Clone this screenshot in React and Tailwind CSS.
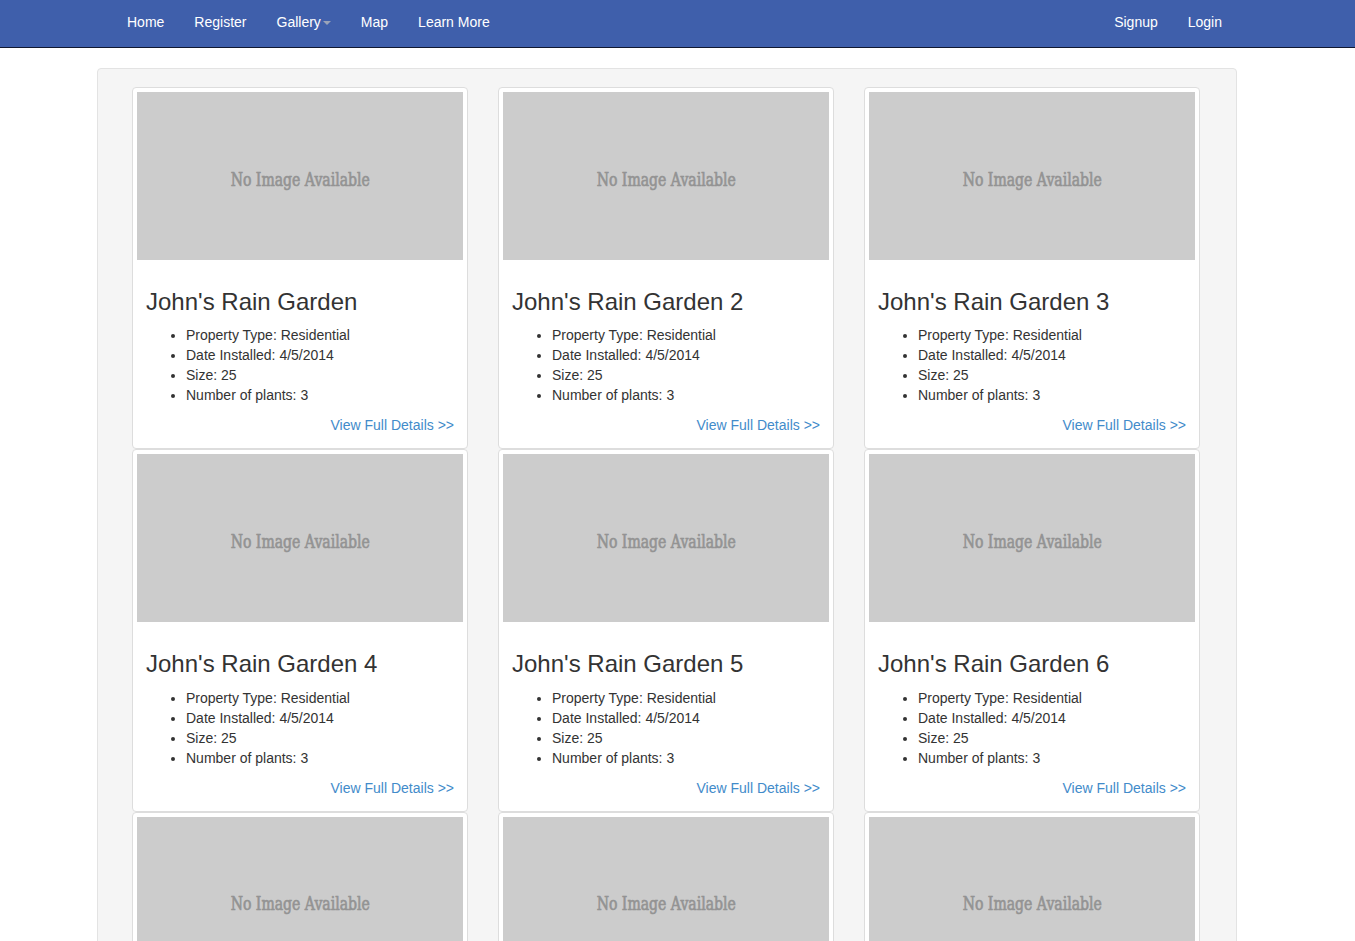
import React from 'react';

const gardens = [
    "John's Rain Garden",
    "John's Rain Garden 2",
    "John's Rain Garden 3",
    "John's Rain Garden 4",
    "John's Rain Garden 5",
    "John's Rain Garden 6",
    "John's Rain Garden 7",
    "John's Rain Garden 8",
    "John's Rain Garden 9",
];

const GardenCard = ({ name }) => (
    <div className="border border-[#ddd] rounded bg-white p-1">
        <div className="h-[168px] bg-[#ccc] flex items-center justify-center pt-[6px]">
            <span className="inline-block scale-x-[0.78] whitespace-nowrap text-[#939393] text-[18px] [font-family:'DejaVu_Serif',serif] [-webkit-text-stroke:0.7px_#939393]">
                No Image Available
            </span>
        </div>
        <div className="px-[9px] pt-[9px] pb-[9px] text-[#333]">
            <h3 className="mt-5 mb-[10px] text-2xl leading-[1.1] font-normal">{name}</h3>
            <ul className="list-disc pl-10 text-sm leading-5 mb-[10px]">
                <li>Property Type: Residential</li>
                <li>Date Installed: 4/5/2014</li>
                <li>Size: 25</li>
                <li>Number of plants: 3</li>
            </ul>
            <p className="text-right text-sm leading-5">
                <a href="#" className="text-[#428bca]">View Full Details &gt;&gt;</a>
            </p>
        </div>
    </div>
);

const App = () => {
    return (
        <div className="min-h-screen bg-white [font-family:'Liberation_Sans',Arial,sans-serif]">
            <nav className="h-[48px] bg-[#3f5fab] border-b border-[#101830]">
                <div className="ml-[112px] w-[1125px] h-full flex items-center justify-between text-sm text-white pb-[4px]">
                    <ul className="flex">
                        <li className="px-[15px]">Home</li>
                        <li className="px-[15px]">Register</li>
                        <li className="px-[15px] flex items-center">
                            Gallery
                            <span className="ml-[2px] mt-[2px] w-0 h-0 border-l-4 border-r-4 border-t-4 border-l-transparent border-r-transparent border-t-[#9aa3b8]"></span>
                        </li>
                        <li className="px-[15px]">Map</li>
                        <li className="px-[15px]">Learn More</li>
                    </ul>
                    <ul className="flex">
                        <li className="px-[15px]">Signup</li>
                        <li className="px-[15px]">Login</li>
                    </ul>
                </div>
            </nav>

            <div className="ml-[97px] w-[1140px] mt-5 bg-[#f5f5f5] border border-[#e3e3e3] rounded pl-[34px] pr-[36px] pt-[18px] pb-5">
                <div className="grid grid-cols-[336px_336px_336px] gap-x-[30px]">
                    {gardens.map((g) => (
                        <GardenCard key={g} name={g} />
                    ))}
                </div>
            </div>
        </div>
    );
};

export default App;
